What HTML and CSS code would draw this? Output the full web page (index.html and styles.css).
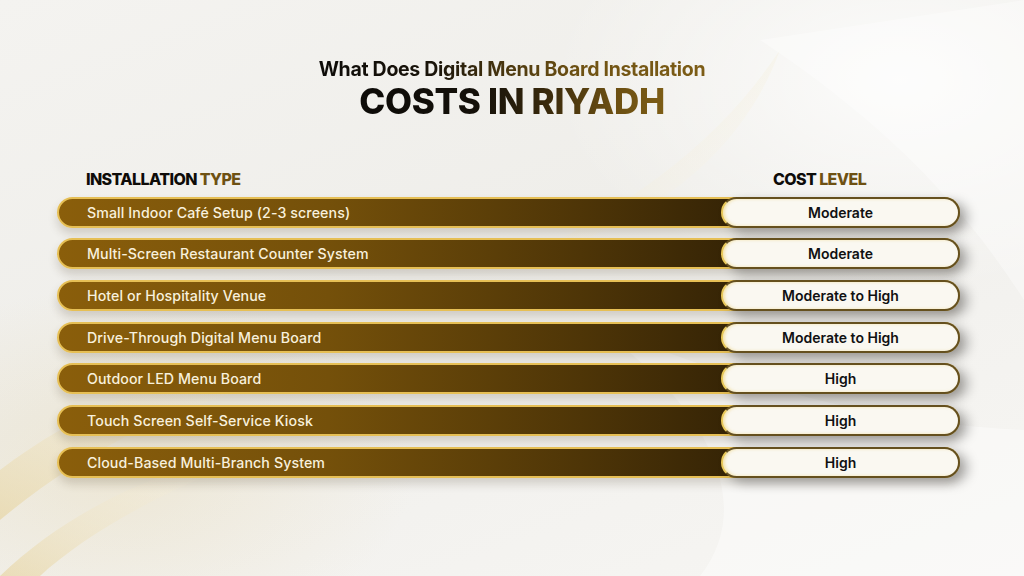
FILE: index.html
```html
<!DOCTYPE html>
<html lang="en">
<head>
<meta charset="utf-8">
<title>Digital Menu Board Installation Costs in Riyadh</title>
<link rel="stylesheet" href="styles.css">
</head>
<body>
<div class="page">
  <svg class="bg-art" width="1024" height="576" viewBox="0 0 1024 576" aria-hidden="true">
    <defs>
      <linearGradient id="g1" x1="0" y1="0" x2="1" y2="1">
        <stop offset="0" stop-color="#e9d9a8" stop-opacity="0.55"/>
        <stop offset="1" stop-color="#ffffff" stop-opacity="0"/>
      </linearGradient>
      <linearGradient id="g2" x1="0" y1="1" x2="1" y2="0">
        <stop offset="0" stop-color="#e6d29a" stop-opacity="0.6"/>
        <stop offset="1" stop-color="#ffffff" stop-opacity="0"/>
      </linearGradient>
    </defs>
    <path d="M780 50 C 740 160, 640 230, 520 260 C 640 200, 720 140, 780 50 Z" fill="url(#g1)"/>
    <path d="M0 470 C 120 380, 260 340, 420 360 C 260 370, 120 420, 0 520 Z" fill="url(#g2)"/>
    <path d="M0 576 C 80 500, 180 460, 300 440 C 180 480, 90 530, 40 576 Z" fill="url(#g2)"/>
    <path d="M1024 0 L1024 300 C 960 200, 880 120, 760 40 Z" fill="#ffffff" fill-opacity="0.35"/>
    <path d="M600 330 C 700 360, 820 420, 1024 430 L1024 576 L700 576 C 760 500, 700 400, 600 330 Z" fill="#ffffff" fill-opacity="0.4"/>
  </svg>

  <header class="title">
    <h1 class="title-top">What Does Digital Menu Board Installation</h1>
    <h2 class="title-main">COSTS IN RIYADH</h2>
  </header>

  <section class="table">
    <div class="table-head">
      <div class="th th-type"><span class="dark">INSTALLATION</span> <span class="gold">TYPE</span></div>
      <div class="th th-cost"><span class="dark">COST</span> <span class="gold">LEVEL</span></div>
    </div>

    <div class="row"><span class="row-label">Small Indoor Café Setup (2-3 screens)</span><span class="pill">Moderate</span></div>
    <div class="row"><span class="row-label">Multi-Screen Restaurant Counter System</span><span class="pill">Moderate</span></div>
    <div class="row"><span class="row-label">Hotel or Hospitality Venue</span><span class="pill">Moderate to High</span></div>
    <div class="row"><span class="row-label">Drive-Through Digital Menu Board</span><span class="pill">Moderate to High</span></div>
    <div class="row"><span class="row-label">Outdoor LED Menu Board</span><span class="pill">High</span></div>
    <div class="row"><span class="row-label">Touch Screen Self-Service Kiosk</span><span class="pill">High</span></div>
    <div class="row"><span class="row-label">Cloud-Based Multi-Branch System</span><span class="pill">High</span></div>
  </section>
</div>
</body>
</html>
```

FILE: styles.css
```css
* { box-sizing: border-box; }

html, body {
  margin: 0;
  padding: 0;
}

body {
  width: 1024px;
  height: 576px;
  overflow: hidden;
  font-family: Inter, "Open Sans", "Liberation Sans", sans-serif;
}

.page {
  position: relative;
  width: 1024px;
  height: 576px;
  overflow: hidden;
  background:
    radial-gradient(ellipse 420px 260px at 120px 470px, rgba(230, 214, 170, 0.35), rgba(255,255,255,0) 70%),
    radial-gradient(ellipse 500px 300px at 900px 80px, rgba(255,255,255,0.8), rgba(255,255,255,0) 70%),
    linear-gradient(160deg, #f4f3f0 0%, #efeeea 45%, #f3f2ef 70%, #f7f6f3 100%);
}

.bg-art {
  position: absolute;
  left: 0;
  top: 0;
  pointer-events: none;
}

.title {
  position: relative;
  display: flex;
  flex-direction: column;
  align-items: center;
  padding-top: 57px;
}

.title-top,
.title-main {
  margin: 0;
  -webkit-background-clip: text;
  background-clip: text;
  color: transparent;
}

.title-top {
  background-image: linear-gradient(90deg, #0d0b08 0%, #1a140a 30%, #4e3a10 50%, #6f5213 68%, #7d5d16 100%);
  font-size: 19.5px;
  font-weight: 700;
  letter-spacing: -0.3px;
  line-height: 24px;
}

.title-main {
  background-image: linear-gradient(90deg, #0d0b08 0%, #15110a 40%, #3a2a0c 62%, #6a4e12 82%, #7d5d16 100%);
  font-size: 35px;
  font-weight: 800;
  line-height: 40px;
  letter-spacing: -0.3px;
}

.table {
  position: relative;
  margin: 49px 0 0 57px;
  width: 903px;
  display: flex;
  flex-direction: column;
  gap: 10.7px;
}

.table-head {
  display: flex;
  justify-content: space-between;
  height: 18px;
  margin-bottom: -2px;
}

.th {
  font-size: 16px;
  font-weight: 800;
  letter-spacing: -0.6px;
  line-height: 18px;
}

.th-type { padding-left: 29px; }
.th-cost { width: 238px; padding-left: 51px; }

.dark { color: #0e0c09; }
.gold { color: #6e5112; }

.row {
  height: 31px;
  display: flex;
  align-items: center;
  justify-content: space-between;
  border-radius: 16px;
  border: 2px solid #e6bf55;
  background: linear-gradient(90deg, #8a5e0b 0%, #74500a 30%, #4e3507 58%, #2e1f05 80%, #261903 100%);
  box-shadow: 0 6px 10px rgba(60, 45, 20, 0.18);
}

.row-label {
  padding-left: 28px;
  color: #f8f0dc;
  font-size: 14.2px;
  font-weight: 500;
  letter-spacing: 0.1px;
}

.pill {
  width: 239px;
  height: 31px;
  margin-right: -2px;
  display: flex;
  align-items: center;
  justify-content: center;
  border-radius: 16px;
  border: 2px solid #65501e;
  border-left-color: #e8c85a;
  background: #faf8f1;
  box-shadow: inset 2px 0 3px rgba(240, 210, 110, 0.5), 8px 5px 12px rgba(0, 0, 0, 0.28);
  color: #111;
  font-size: 14px;
  font-weight: 600;
}
```
